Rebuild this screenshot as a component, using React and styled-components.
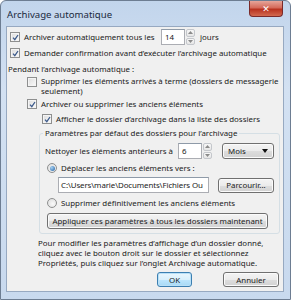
import React from "react";
import styled, { createGlobalStyle } from "styled-components";

const Global = createGlobalStyle`
  html, body { margin: 0; padding: 0; background: #fff; }
  body { font-family: "Noto Sans", "Open Sans", sans-serif; }
`;

const Frame = styled.div`
  width: 291px;
  height: 300px;
  box-sizing: border-box;
  background: linear-gradient(180deg, #c2d5ec 0%, #d3e1f2 30%, #c8d9ee 100%);
  border: 1px solid #6d7d92;
  border-radius: 6px 6px 0 0;
  padding: 0 6px 7px 5px;
  display: flex;
  flex-direction: column;
`;

const TitleBar = styled.div`
  height: 25px;
  display: flex;
  align-items: flex-start;
  justify-content: space-between;
`;

const Title = styled.div`
  font-size: 9.6px;
  color: #1b2a3d;
  padding: 7px 0 0 1px;
`;

const CloseBtn = styled.div`
  width: 32px;
  height: 15px;
  margin-right: 1px;
  border: 1px solid #7a2a2a;
  border-top: none;
  border-radius: 0 0 4px 4px;
  background: linear-gradient(180deg, #e6a59a 0%, #d46a5a 45%, #b8321f 55%, #d26a50 100%);
  display: flex;
  align-items: center;
  justify-content: center;
  color: #fff;
  font-size: 9px;
  font-weight: bold;
  font-family: "DejaVu Sans", sans-serif;
`;

const Content = styled.div`
  flex: 1;
  background: #f0f0f0;
  border: 1px solid #97a9c1;
  display: flex;
  flex-direction: column;
  font-size: 7.9px;
  color: #1a1a1a;
  padding-top: 2px;
`;

const Row = styled.div`
  display: flex;
  align-items: center;
  height: ${(p) => p.h || 16}px;
  margin-left: ${(p) => p.indent || 0}px;
  margin-top: ${(p) => p.mt || 0}px;
  white-space: nowrap;
`;

const Label = styled.span`
  margin-left: ${(p) => p.ml || 0}px;
  ${(p) => (p.w ? `width: ${p.w}px; flex: none;` : "")}
`;

const TwoLine = styled.div`
  display: flex;
  align-items: flex-start;
  margin-left: ${(p) => p.indent || 0}px;
  margin-top: ${(p) => p.mt || 0}px;
  line-height: 10px;
  white-space: nowrap;
`;

const BoxCheck = styled.span`
  width: 8px;
  height: 8px;
  flex: none;
  border: 1px solid #8e8f8f;
  background: linear-gradient(135deg, #dcdcdc 0%, #fbfbfb 100%);
  box-shadow: inset 0 0 0 1px #f4f4f4;
  display: inline-flex;
  align-items: center;
  justify-content: center;
  margin-top: ${(p) => p.mt || 0}px;
`;

const Checkbox = ({ checked, mt }) => (
  <BoxCheck mt={mt}>
    {checked && (
      <svg width="7" height="7" viewBox="0 0 7 7">
        <path d="M1 3.6 L2.8 5.6 L6 1" fill="none" stroke="#3d5b8c" strokeWidth="1.3" />
      </svg>
    )}
  </BoxCheck>
);

const RadioOuter = styled.span`
  width: 8px;
  height: 8px;
  flex: none;
  border-radius: 50%;
  border: 1px solid #8e8f8f;
  background: radial-gradient(circle at 60% 60%, #fafafa, #d8d8d8);
  display: inline-flex;
  align-items: center;
  justify-content: center;
`;

const RadioDot = styled.span`
  width: 5px;
  height: 5px;
  border-radius: 50%;
  background: radial-gradient(circle at 35% 35%, #a7d1f2, #1f5fa3);
`;

const Radio = ({ checked }) => (
  <RadioOuter>{checked && <RadioDot />}</RadioOuter>
);

const SpinWrap = styled.span`
  display: inline-flex;
  align-items: stretch;
  height: ${(p) => p.h}px;
  margin-left: ${(p) => p.ml || 0}px;
`;

const SpinField = styled.span`
  width: ${(p) => p.w}px;
  box-sizing: border-box;
  border: 1px solid #abadb3;
  border-top-color: #8e9aa8;
  background: #fff;
  display: flex;
  align-items: center;
  padding-left: 3px;
`;

const SpinArrows = styled.span`
  width: 9px;
  margin-left: 1px;
  display: flex;
  flex-direction: column;
  gap: 1px;
`;

const SpinBtn = styled.span`
  flex: 1;
  border: 1px solid #c4c7cc;
  border-radius: 2px;
  background: linear-gradient(180deg, #f7f7f7, #e6e6e6);
  display: flex;
  align-items: center;
  justify-content: center;
`;

const Spinner = ({ value, w, h, ml }) => (
  <SpinWrap h={h} ml={ml}>
    <SpinField w={w}>{value}</SpinField>
    <SpinArrows>
      <SpinBtn>
        <svg width="5" height="3" viewBox="0 0 5 3"><path d="M0 3 L2.5 0 L5 3Z" fill="#8a8a8a" /></svg>
      </SpinBtn>
      <SpinBtn>
        <svg width="5" height="3" viewBox="0 0 5 3"><path d="M0 0 L2.5 3 L5 0Z" fill="#8a8a8a" /></svg>
      </SpinBtn>
    </SpinArrows>
  </SpinWrap>
);

const Button = styled.span`
  box-sizing: border-box;
  height: ${(p) => p.h || 16}px;
  width: ${(p) => p.w}px;
  margin-left: ${(p) => p.ml || 0}px;
  border: 1px solid ${(p) => (p.def ? "#3c7fb1" : "#707070")};
  border-radius: 3px;
  background: ${(p) =>
    p.def
      ? "linear-gradient(180deg, #eaf6fd 0%, #d9f0fc 50%, #bee6fd 51%, #a7d9f5 100%)"
      : "linear-gradient(180deg, #f4f4f4 0%, #ebebeb 50%, #dddddd 51%, #d2d2d2 100%)"};
  box-shadow: inset 0 0 0 1px ${(p) => (p.def ? "#b9e0f7" : "#fbfbfb")};
  display: inline-flex;
  align-items: center;
  justify-content: ${(p) => p.align || "center"};
  padding: 0 5px;
  white-space: nowrap;
`;

const Caret = styled.span`
  width: 0;
  height: 0;
  border-left: 3.5px solid transparent;
  border-right: 3.5px solid transparent;
  border-top: 4px solid #111;
`;

const Group = styled.fieldset`
  margin: 1px 3px 0 32px;
  padding: 4px 0 4px 0;
  border: 1px solid #d5dfe5;
  border-radius: 3px;
  display: flex;
  flex-direction: column;
  min-width: 0;
`;

const Legend = styled.legend`
  padding: 0 2px;
  margin-left: 3px;
  font-size: 7.9px;
  line-height: 11px;
`;

const PathField = styled.span`
  box-sizing: border-box;
  width: 151px;
  height: 16px;
  border: 1px solid #abadb3;
  border-top-color: #8e9aa8;
  background: #fff;
  display: inline-flex;
  align-items: center;
  padding-left: 2px;
  overflow: hidden;
  white-space: nowrap;
  letter-spacing: -0.1px;
`;

const Para = styled.div`
  margin: 4px 0 0 31px;
  line-height: 10px;
  white-space: nowrap;
`;

const Footer = styled.div`
  display: flex;
  justify-content: flex-end;
  gap: 31px;
  margin: 4px 4px 0 0;
`;

export default function App() {
  return (
    <>
      <Global />
      <Frame>
        <TitleBar>
          <Title>Archivage automatique</Title>
          <CloseBtn>✕</CloseBtn>
        </TitleBar>
        <Content>
          <Row indent={3} h={16}>
            <Checkbox checked />
            <Label ml={4} w={137}>Archiver automatiquement tous les</Label>
            <Spinner value="14" w={24} h={16} />
            <Label ml={5}>jours</Label>
          </Row>
          <Row indent={3} h={16}>
            <Checkbox checked />
            <Label ml={4}>Demander confirmation avant d’exécuter l’archivage automatique</Label>
          </Row>
          <Row indent={0} h={16}>
            <Label ml={1}>Pendant l’archivage automatique :</Label>
          </Row>
          <TwoLine indent={20} mt={-1}>
            <Checkbox mt={1} />
            <Label ml={4}>
              Supprimer les éléments arrivés à terme (dossiers de messagerie
              <br />
              seulement)
            </Label>
          </TwoLine>
          <Row indent={20} h={14} mt={1}>
            <Checkbox checked />
            <Label ml={4}>Archiver ou supprimer les anciens éléments</Label>
          </Row>
          <Row indent={35} h={16}>
            <Checkbox checked />
            <Label ml={4}>Afficher le dossier d’archivage dans la liste des dossiers</Label>
          </Row>
          <Group>
            <Legend>Paramètres par défaut des dossiers pour l’archivage</Legend>
            <Row indent={5} h={16}>
              <Label w={133}>Nettoyer les éléments antérieurs à</Label>
              <Spinner value="6" w={24} h={16} />
              <Button w={52} h={16} ml={10} align="space-between">
                <span>Mois</span>
                <Caret />
              </Button>
            </Row>
            <Row indent={7} h={18}>
              <Radio checked />
              <Label ml={4}>Déplacer les anciens éléments vers :</Label>
            </Row>
            <Row indent={18} h={16}>
              <PathField>C:\Users\marie\Documents\Fichiers Ou</PathField>
              <Button w={56} h={15} ml={9}>Parcourir...</Button>
            </Row>
            <Row indent={7} h={20}>
              <Radio />
              <Label ml={4}>Supprimer définitivement les anciens éléments</Label>
            </Row>
            <Row indent={7} h={16}>
              <Button w={221} h={16}>Appliquer ces paramètres à tous les dossiers maintenant</Button>
            </Row>
          </Group>
          <Para>
            Pour modifier les paramètres d’affichage d’un dossier donné,
            <br />
            cliquez avec le bouton droit sur le dossier et sélectionnez
            <br />
            Propriétés, puis cliquez sur l’onglet Archivage automatique.
          </Para>
          <Footer>
            <Button def w={35} h={15}>OK</Button>
            <Button w={56} h={15}>Annuler</Button>
          </Footer>
        </Content>
      </Frame>
    </>
  );
}
